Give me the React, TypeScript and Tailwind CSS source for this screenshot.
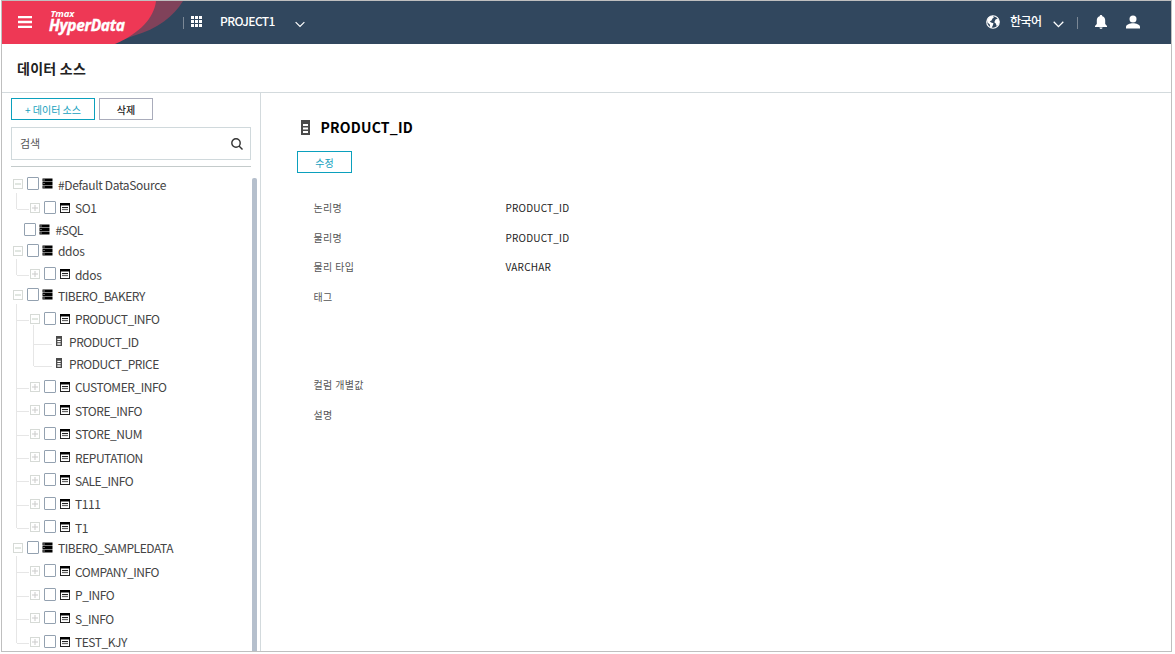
import type { ReactNode } from "react";

type Kind = "source" | "bare" | "table" | "column";

type Node = {
  label: string;
  kind: Kind;
  height: string;
  open?: boolean;
  low?: boolean;
  last?: boolean;
};

const nodes: Node[] = [
  { label: "#Default DataSource", kind: "source", height: "h-[24px]", open: true, low: true },
  { label: "SO1", kind: "table", height: "h-[22px]", last: true },
  { label: "#SQL", kind: "bare", height: "h-[21px]" },
  { label: "ddos", kind: "source", height: "h-[23px]", open: true },
  { label: "ddos", kind: "table", height: "h-[21px]", low: true, last: true },
  { label: "TIBERO_BAKERY", kind: "source", height: "h-[24px]", open: true, low: true },
  { label: "PRODUCT_INFO", kind: "table", height: "h-[23px]", open: true },
  { label: "PRODUCT_ID", kind: "column", height: "h-[22px]" },
  { label: "PRODUCT_PRICE", kind: "column", height: "h-[23px]", last: true },
  { label: "CUSTOMER_INFO", kind: "table", height: "h-[23px]" },
  { label: "STORE_INFO", kind: "table", height: "h-[24px]", low: true },
  { label: "STORE_NUM", kind: "table", height: "h-[23px]" },
  { label: "REPUTATION", kind: "table", height: "h-[23px]", low: true },
  { label: "SALE_INFO", kind: "table", height: "h-[24px]", low: true },
  { label: "T111", kind: "table", height: "h-[23px]" },
  { label: "T1", kind: "table", height: "h-[21px]", low: true, last: true },
  { label: "TIBERO_SAMPLEDATA", kind: "source", height: "h-[23px]", open: true },
  { label: "COMPANY_INFO", kind: "table", height: "h-[24px]", low: true },
  { label: "P_INFO", kind: "table", height: "h-[23px]" },
  { label: "S_INFO", kind: "table", height: "h-[24px]", low: true },
  { label: "TEST_KJY", kind: "table", height: "h-[16px]", last: true },
];

function Expander({ open }: { open?: boolean }) {
  return (
    <svg className="relative mt-[2px] h-[11px] w-[11px] shrink-0" viewBox="0 0 11 11">
      <rect x="0.5" y="0.5" width="9" height="9" fill="#fff" stroke="#d6dad6" />
      <path d="M2 5h6" stroke={open ? "#c3cec3" : "#cbcbcb"} />
      {!open && <path d="M5 2v6" stroke="#cbcbcb" />}
    </svg>
  );
}

function Checkbox() {
  return <span className="h-[13px] w-[12px] shrink-0 rounded-[1px] border border-[#93a1b0] bg-white" />;
}

function DatabaseIcon() {
  return (
    <svg className="mt-[1px] h-[11px] w-[11px] shrink-0" viewBox="0 0 11 11">
      <path d="M0.5 0.5h10v2.900h-10zM0.5 4h10v2.900h-10zM0.5 7.500h10v3h-10z" fill="#000" />
      <path d="M1.400 1.600h1.200v.8h-1.200zM1.400 5h1.200v.8h-1.200zM1.400 8.600h1.200v.8h-1.200z" fill="#ddd" />
    </svg>
  );
}

function TableIcon() {
  return (
    <svg className="mt-[2px] h-[10px] w-[10px] shrink-0" viewBox="0 0 10 10">
      <rect x="0.5" y="0.5" width="9" height="9" fill="#fff" stroke="#222" />
      <path d="M0 0h10v2.500H0z" fill="#000" />
      <path d="M2 4.500h6" stroke="#222" />
      <path d="M2 6.500h6" stroke="#666" strokeWidth="1.300" />
    </svg>
  );
}

function ColumnIcon({ className }: { className: string }) {
  return (
    <svg className={className} viewBox="0 0 9 15" preserveAspectRatio="none">
      <path d="M0 0h9v15H0z" fill="#4a4a4a" />
      <path d="M2 4h5v2H2zM2 7.500h5v2H2zM2 11h5v2H2z" fill="#fff" />
    </svg>
  );
}

function TreeText({ low, className, children }: { low?: boolean; className: string; children: string }) {
  const tracking = /[a-z]/.test(children) ? "tracking-[-0.340px]" : "tracking-[-0.460px]";
  return (
    <span
      className={`${className} ${tracking} ${low ? "" : "-mt-px"} whitespace-nowrap text-[12px] leading-[16px] text-[#444]`}
    >
      {children}
    </span>
  );
}

function Entry({ className, children }: { className: string; children: ReactNode }) {
  return <div className={`${className} flex items-start`}>{children}</div>;
}

function TreeRow({ node }: { node: Node }) {
  const { kind, height, last, low, open, label } = node;
  return (
    <div className={`${height} relative flex shrink-0 items-start`}>
      {kind === "table" && (
        <>
          <span className={`absolute left-[5px] -top-[8px] w-px bg-[#e6e6e6] ${last ? "h-[16px]" : "h-[32px]"}`} />
          <span className="absolute left-[6px] top-[8px] h-px w-[12px] bg-[#e6e6e6]" />
        </>
      )}
      {kind === "column" && (
        <>
          <span className="absolute left-[5px] -top-[8px] h-[38px] w-px bg-[#e6e6e6]" />
          <span className={`absolute left-[22px] -top-[10px] w-px bg-[#e6e6e6] ${last ? "h-[19px]" : "h-[32px]"}`} />
          <span className="absolute left-[23px] top-[9px] h-px w-[18px] bg-[#e6e6e6]" />
        </>
      )}
      {kind === "source" && (
        <Entry className="pl-[2px]">
          <Expander open={open} />
          <span className="w-[3px]" />
          <Checkbox />
          <span className="w-[3px]" />
          <DatabaseIcon />
          <TreeText low={low} className="ml-[5px]">
            {label}
          </TreeText>
        </Entry>
      )}
      {kind === "bare" && (
        <Entry className="pl-[13px]">
          <Checkbox />
          <span className="w-[3px]" />
          <DatabaseIcon />
          <TreeText low={low} className="ml-[5.500px]">
            {label}
          </TreeText>
        </Entry>
      )}
      {kind === "table" && (
        <Entry className="pl-[19px]">
          <Expander open={open} />
          <span className="w-[3px]" />
          <Checkbox />
          <span className="w-[4px]" />
          <TableIcon />
          <TreeText low={low} className="ml-[5px]">
            {label}
          </TreeText>
        </Entry>
      )}
      {kind === "column" && (
        <Entry className="pl-[45px]">
          <ColumnIcon className="mt-[1px] h-[10px] w-[6px]" />
          <TreeText low={low} className="ml-[7px]">
            {label}
          </TreeText>
        </Entry>
      )}
    </div>
  );
}

function Chevron({ className }: { className: string }) {
  return (
    <svg className={className} viewBox="0 0 11 7" fill="none" stroke="#fff" strokeWidth="1.300">
      <path d="M0.700 0.800L5.500 5.600L10.300 0.800" />
    </svg>
  );
}

function Header() {
  return (
    <header className="relative flex h-[43px] shrink-0 items-center bg-[#31475e] pb-[2px] text-white">
      <svg className="absolute left-0 top-0 h-[43px] w-[190px]" viewBox="0 0 190 43">
        <path d="M130 0H181C172 15 156 28 131 35L110 43Z" fill="#80425a" />
        <path d="M0 0H154C152 17 138 32 113 43H0Z" fill="#ee3855" />
      </svg>
      <svg className="relative ml-[16px] h-[12px] w-[14px]" viewBox="0 0 14 12">
        <path d="M0 0h14v2.300H0zM0 4.850h14v2.300H0zM0 9.700h14v2.300H0z" fill="#fff" />
      </svg>
      <div className="relative ml-[17px] mt-[2px] flex h-[43px] w-[134px] flex-col pt-[7px] font-['Open_Sans'] font-bold italic">
        <span className="ml-[1.500px] text-[9.500px] leading-[11px] tracking-[-0.200px]">Tmax</span>
        <span className="-mt-px text-[15.500px] leading-[14px] tracking-[-0.320px] [-webkit-text-stroke:0.400px_#fff]">
          HyperData
        </span>
      </div>
      <span className="mt-[2px] h-[12px] w-px bg-[#7b8896]" />
      <svg className="ml-[7px] h-[11px] w-[11px]" viewBox="0 0 11 11">
        <path
          d="M0 0h3v3H0zM4 0h3v3H4zM8 0h3v3H8zM0 4h3v3H0zM4 4h3v3H4zM8 4h3v3H8zM0 8h3v3H0zM4 8h3v3H4zM8 8h3v3H8z"
          fill="#fff"
        />
      </svg>
      <span className="-mt-[2px] ml-[18px] w-[75px] text-[12px] font-medium leading-[16px] tracking-[-0.600px]">
        PROJECT1
      </span>
      <Chevron className="mt-[5px] h-[7px] w-[10px]" />
      <div className="flex-1" />
      <svg className="mr-[-1px] h-[14px] w-[14px]" viewBox="0 0 14 14">
        <circle cx="7" cy="7" r="6.300" fill="#31475e" stroke="#fff" strokeWidth="1.100" />
        <path
          d="M1 5L3.500 1.800L6.500 0.800L8 2.200L6.500 3.500L5.500 5.500L3.800 6.200L5 7.500L7.500 8.300L6.800 10.500L5.500 13L4.200 12.200L3.800 9.500L1.500 7.500ZM9.500 4.500L12 3.500L13.300 6L12.800 9L10.800 11.200L9.800 8.500L8.300 7.200Z"
          fill="#fff"
        />
      </svg>
      <span className="-mt-px ml-[11px] w-[43px] text-[12px] font-medium leading-[16px] tracking-[-0.500px]">한국어</span>
      <Chevron className="mt-[5px] h-[7px] w-[11px]" />
      <span className="ml-[13px] mt-[2px] h-[12px] w-px bg-[#7b8896]" />
      <svg className="ml-[17px] h-[14px] w-[12px]" viewBox="0 0 12 14">
        <path
          d="M6 0C6.800 0 7.300 .5 7.300 1.200C9.200 1.800 10.200 3.300 10.200 5.500V9L12 11V12H0V11L1.800 9V5.500C1.800 3.300 2.800 1.800 4.700 1.200C4.700 .5 5.200 0 6 0ZM4.400 12.600H7.600C7.400 13.600 6.800 14 6 14S4.600 13.600 4.400 12.600Z"
          fill="#fff"
        />
      </svg>
      <svg className="ml-[19px] mr-[31px] h-[14px] w-[14px]" viewBox="0 0 14 14">
        <circle cx="7" cy="4" r="3.500" fill="#fff" />
        <path d="M0 13.500V11.800C0 9.500 4 8.300 7 8.300S14 9.500 14 11.800V13.500Z" fill="#fff" />
      </svg>
    </header>
  );
}

const fields = [
  { name: "논리명", value: "PRODUCT_ID", height: "h-[30px]" },
  { name: "물리명", value: "PRODUCT_ID", height: "h-[29px]" },
  { name: "물리 타입", value: "VARCHAR", height: "h-[30px]" },
  { name: "태그", value: "", height: "h-[88px]" },
  { name: "컬럼 개별값", value: "", height: "h-[30px]" },
  { name: "설명", value: "", height: "h-[30px]" },
];

export default function App() {
  return (
    <div className="h-[654px] w-[1175px] bg-white pl-px font-['Noto_Sans_CJK_KR',sans-serif]">
      <div className="flex h-[652px] w-[1171px] flex-col overflow-hidden border border-[#bfbfbf] bg-white">
        <Header />
        <div className="flex h-[49px] shrink-0 items-center border-b border-[#d3dadd] pl-[15px]">
          <h1 className="-mt-px text-[14px] font-bold leading-[20px] tracking-[0.250px] text-[#222]">데이터 소스</h1>
        </div>
        <div className="flex min-h-0 flex-1">
          <aside className="flex w-[259px] shrink-0 flex-col border-r border-[#d3dadd] pl-[9px] pt-[5px]">
            <div className="flex gap-[4px]">
              <button className="h-[22px] w-[84px] whitespace-nowrap border border-[#0ba0bd] pt-px text-[10px] leading-[19px] text-[#159fbe]">
                + 데이터 소스
              </button>
              <button className="h-[22px] w-[54px] border border-[#a9acbb] pt-px text-[10px] font-medium leading-[19px] text-[#222]">
                삭제
              </button>
            </div>
            <div className="mt-[7px] flex h-[33px] w-[240px] shrink-0 items-center justify-between border border-[#d0d9dc] pl-[8px] pr-[7px]">
              <span className="-mt-[2px] text-[11px] leading-[16px] text-[#555]">검색</span>
              <svg className="h-[12px] w-[12px]" viewBox="0 0 12 12" fill="none" stroke="#333" strokeWidth="1.400">
                <circle cx="5" cy="5" r="4.200" />
                <path d="M8 8L11.500 11.500" />
              </svg>
            </div>
            <div className="mt-[6px] h-px w-[240px] shrink-0 bg-[#c4cbcb]" />
            <div className="flex min-h-0 flex-1 pt-[10px]">
              <div className="flex w-[241px] flex-col">
                {nodes.map((node, i) => (
                  <TreeRow key={i} node={node} />
                ))}
              </div>
              <div className="mt-px w-[5px] rounded-t-[2px] bg-[#b5bfcc]" />
            </div>
          </aside>
          <main className="flex flex-1 flex-col pl-[36px] pt-[25px]">
            <div className="flex h-[20px] items-center">
              <ColumnIcon className="-mt-px ml-[4px] h-[15px] w-[9px]" />
              <h2 className="-mt-[2px] ml-[10.500px] text-[14px] font-bold leading-[20px] tracking-[0.200px] text-black">
                PRODUCT_ID
              </h2>
            </div>
            <button className="mt-[13px] h-[22px] w-[55px] border border-[#0ba0bd] pt-px text-[10px] leading-[19px] text-[#159fbe]">
              수정
            </button>
            <dl className="mt-[27px] flex flex-col pl-[16.500px] text-[10px] leading-[16px]">
              {fields.map((field) => (
                <div key={field.name} className={`${field.height} flex items-start`}>
                  <dt className="w-[192px] tracking-[0.350px] text-[#555]">{field.name}</dt>
                  <dd className="tracking-[0.200px] text-[#222]">{field.value}</dd>
                </div>
              ))}
            </dl>
          </main>
        </div>
      </div>
    </div>
  );
}
